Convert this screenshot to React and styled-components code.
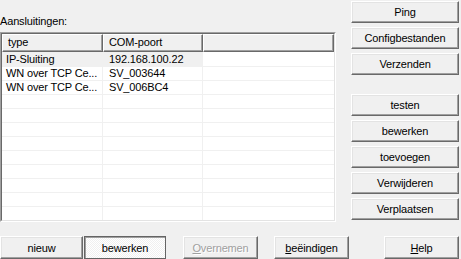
import React from "react";
import styled, { createGlobalStyle, css } from "styled-components";

const Global = createGlobalStyle`
  html, body { margin: 0; padding: 0; background: #f0f0f0; }
  #root { width: 461px; height: 259px; overflow: hidden; }
  * { box-sizing: border-box; }
`;

const Window = styled.div`
  width: 461px;
  height: 259px;
  display: flex;
  flex-direction: column;
  background: #f0f0f0;
  font-family: "Liberation Sans", Arial, sans-serif;
  font-size: 11px;
  letter-spacing: -0.15px;
  color: #000;
`;

const Main = styled.div`
  display: grid;
  grid-template-columns: 336px 108px;
  column-gap: 15px;
  height: 222px;
`;

const LeftPane = styled.div`
  display: flex;
  flex-direction: column;
`;

const Label = styled.div`
  height: 32px;
  padding: 15px 0 0 0;
  line-height: 13px;
`;

const ListOuter = styled.div`
  flex: 1;
  border-top: 1px solid #a0a0a0;
  border-left: 1px solid #a0a0a0;
  border-right: 1px solid #ffffff;
  border-bottom: 1px solid #ffffff;
  display: flex;
`;

const ListInner = styled.div`
  flex: 1;
  border-top: 1px solid #696969;
  border-left: 1px solid #696969;
  border-right: 1px solid #e3e3e3;
  border-bottom: 1px solid #e3e3e3;
  background: #fff;
  display: flex;
  flex-direction: column;
  overflow: hidden;
`;

const cols = css`
  display: grid;
  grid-template-columns: 101px 100px 1fr;
`;

const HeaderRow = styled.div`
  ${cols};
  height: 18px;
  background: #f0f0f0;
`;

const HeaderCell = styled.div`
  height: 18px;
  padding-left: 5px;
  line-height: 14px;
  border-top: 1px solid #ffffff;
  border-left: 1px solid #ffffff;
  border-right: 1px solid #696969;
  border-bottom: 1px solid #696969;
  box-shadow: inset -1px -1px 0 #a0a0a0;
  white-space: nowrap;
  overflow: hidden;
`;

const Rows = styled.div`
  flex: 1;
  display: flex;
  flex-direction: column;
`;

const Row = styled.div`
  ${cols};
  height: 14px;
  flex: none;
  border-top: ${(p) => (p.$first ? "none" : "1px solid #f0f0f0")};
`;

const Cell = styled.div`
  line-height: ${(p) => (p.$first ? "14px" : "13px")};
  padding-left: ${(p) => p.$pad}px;
  border-right: ${(p) => (p.$last ? "none" : "1px solid #f0f0f0")};
  background: ${(p) => (p.$sel ? "#f0f0f0" : "transparent")};
  white-space: nowrap;
  overflow: hidden;
`;

const RightPane = styled.div`
  display: flex;
  flex-direction: column;
  gap: 19px;
  padding-top: 1px;
`;

const ButtonGroup = styled.div`
  display: flex;
  flex-direction: column;
  gap: 4px;
`;

const Button = styled.button`
  font: inherit;
  letter-spacing: inherit;
  color: #000;
  width: ${(p) => p.$w || "108px"};
  height: ${(p) => p.$h || "22px"};
  margin: 0 0 0 ${(p) => p.$ml || 0}px;
  padding: 0;
  flex: none;
  text-align: center;
  background: #f0f0f0;
  border-top: 1px solid #ffffff;
  border-left: 1px solid #ffffff;
  border-right: 1px solid #696969;
  border-bottom: 1px solid #696969;
  box-shadow: inset -1px -1px 0 #a0a0a0, inset 1px 1px 0 #e3e3e3;
  border-radius: 0;
  outline: none;
  cursor: default;

  ${(p) =>
    p.$pressed &&
    css`
      border: 1px solid #646464;
      box-shadow: inset 1px 1px 0 #a0a0a0;
      background-color: #f0f0f0;
      background-image: conic-gradient(#ffffff 25%, #f0f0f0 0 50%, #ffffff 0 75%, #f0f0f0 0);
      background-size: 2px 2px;
    `}

  &:disabled {
    color: #a0a0a0;
    text-shadow: 1px 1px 0 #ffffff;
  }

  u {
    text-decoration: underline;
    text-underline-offset: 1px;
  }
`;

const BottomBar = styled.div`
  display: flex;
  margin-top: 14px;
`;

const data = [
  ["IP-Sluiting", "192.168.100.22"],
  ["WN over TCP Ce...", "SV_003644"],
  ["WN over TCP Ce...", "SV_006BC4"],
];

export default function App() {
  const rows = [];
  for (let i = 0; i < 12; i++) {
    const d = data[i] || ["", ""];
    rows.push(
      <Row key={i} $first={i === 0}>
        <Cell $pad={4} $first={i === 0} $sel={i === 0}>{d[0]}</Cell>
        <Cell $pad={6} $first={i === 0} $sel={i === 0}>{d[1]}</Cell>
        <Cell $pad={4} $first={i === 0} $last />
      </Row>
    );
  }
  return (
    <Window>
      <Global />
      <Main>
        <LeftPane>
          <Label>Aansluitingen:</Label>
          <ListOuter>
            <ListInner>
              <HeaderRow>
                <HeaderCell>type</HeaderCell>
                <HeaderCell>COM-poort</HeaderCell>
                <HeaderCell />
              </HeaderRow>
              <Rows>{rows}</Rows>
            </ListInner>
          </ListOuter>
        </LeftPane>
        <RightPane>
          <ButtonGroup>
            <Button>Ping</Button>
            <Button>Configbestanden</Button>
            <Button>Verzenden</Button>
          </ButtonGroup>
          <ButtonGroup>
            <Button>testen</Button>
            <Button>bewerken</Button>
            <Button>toevoegen</Button>
            <Button>Verwijderen</Button>
            <Button>Verplaatsen</Button>
          </ButtonGroup>
        </RightPane>
      </Main>
      <BottomBar>
        <Button $w="83px" $h="23px">nieuw</Button>
        <Button $w="82px" $h="23px" $ml={1} $pressed>bewerken</Button>
        <Button $w="75px" $h="23px" $ml={17} disabled>
          <u>O</u>vernemen
        </Button>
        <Button $w="75px" $h="23px" $ml={16}>
          <u>b</u>eëindigen
        </Button>
        <Button $w="75px" $h="23px" $ml={35}>
          <u>H</u>elp
        </Button>
      </BottomBar>
    </Window>
  );
}
